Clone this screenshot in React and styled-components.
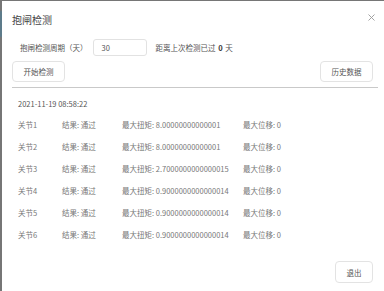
import React from 'react'
import styled, {createGlobalStyle} from 'styled-components'

const GlobalStyle = createGlobalStyle`
  html, body {
    margin: 0;
    padding: 0;
    height: 100%;
    overflow: hidden;
  }
  body {
    background: linear-gradient(to bottom, #767676 0, #767676 10px, #5d7b8a 12px, #5d7b8a 36px, #767676 38px);
    font-family: "Noto Sans CJK SC", "Noto Sans", sans-serif;
  }
`

const Backdrop = styled.div`
  padding: 1px 0 0 2px;
  height: 100vh;
  box-sizing: border-box;
`

const Dialog = styled.div`
  background: #fff;
  height: 100%;
  padding: 0 11px 0 10px;
  box-sizing: border-box;
  display: flex;
  flex-direction: column;
`

const Header = styled.div`
  height: 36px;
  display: flex;
  align-items: center;
  justify-content: space-between;
`

const Title = styled.div`
  font-size: 10px;
  color: #444;
  padding-top: 1px;
`

const Close = styled.div`
  width: 8px;
  height: 8px;
  margin-right: -2px;
  margin-top: -4px;
  display: flex;
  align-items: center;
  justify-content: center;
`

const PeriodRow = styled.div`
  margin-top: 2px;
  padding-left: 8px;
  display: flex;
  align-items: center;
  font-size: 7.5px;
  color: #555;
`

const Input = styled.div`
  width: 54px;
  height: 17px;
  margin-left: 5px;
  box-sizing: border-box;
  border: 1px solid #e2e2e2;
  border-radius: 3px;
  padding-left: 8px;
  display: flex;
  align-items: center;
  color: #555;
`

const Since = styled.span`
  margin-left: 9px;
  b {
    color: #333;
    font-weight: bold;
    margin: 0 1px;
  }
`

const Toolbar = styled.div`
  margin-top: 5px;
  display: flex;
  justify-content: space-between;
`

const Button = styled.div`
  width: ${p => p.w || 53}px;
  height: ${p => p.h || 21}px;
  box-sizing: border-box;
  border: 1px solid #e3e3e3;
  border-radius: 4px;
  display: flex;
  align-items: center;
  justify-content: center;
  font-size: 7.5px;
  color: #555;
  background: #fff;
`

const Divider = styled.div`
  margin-top: 5px;
  margin-right: -5px;
  height: 1px;
  background: #c9c9c9;
`

const Body = styled.div`
  padding-left: 6px;
`

const Stamp = styled.div`
  margin-top: 10px;
  height: 12px;
  line-height: 12px;
  font-size: 7.5px;
  color: #555;
`

const Table = styled.div`
  margin-top: 3px;
  display: grid;
  grid-template-columns: 44px 60px 121px auto;
  grid-auto-rows: 22px;
  align-items: center;
  font-size: 7.5px;
  color: #777;
`

const Footer = styled.div`
  margin-top: 16px;
  display: flex;
  justify-content: flex-end;
`

const joints = [
  {name: '关节1', torque: '8.00000000000001'},
  {name: '关节2', torque: '8.00000000000001'},
  {name: '关节3', torque: '2.7000000000000015'},
  {name: '关节4', torque: '0.9000000000000014'},
  {name: '关节5', torque: '0.9000000000000014'},
  {name: '关节6', torque: '0.9000000000000014'},
]

export default function App() {
  return (
    <Backdrop>
      <GlobalStyle />
      <Dialog>
        <Header>
          <Title>抱闸检测</Title>
          <Close>
            <svg width="7" height="7" viewBox="0 0 7 7">
              <path d="M0.5 0.5L6.5 6.5M6.5 0.5L0.5 6.5" stroke="#999" strokeWidth="0.9" />
            </svg>
          </Close>
        </Header>
        <PeriodRow>
          <span>抱闸检测周期（天）</span>
          <Input>30</Input>
          <Since>距离上次检测已过 <b>0</b> 天</Since>
        </PeriodRow>
        <Toolbar>
          <Button>开始检测</Button>
          <Button>历史数据</Button>
        </Toolbar>
        <Divider />
        <Body>
          <Stamp>2021-11-19 08:58:22</Stamp>
          <Table>
            {joints.map(j => (
              <React.Fragment key={j.name}>
                <span>{j.name}</span>
                <span>结果: 通过</span>
                <span>最大扭矩: {j.torque}</span>
                <span>最大位移: 0</span>
              </React.Fragment>
            ))}
          </Table>
        </Body>
        <Footer>
          <Button w={38} h={22}>退出</Button>
        </Footer>
      </Dialog>
    </Backdrop>
  )
}
